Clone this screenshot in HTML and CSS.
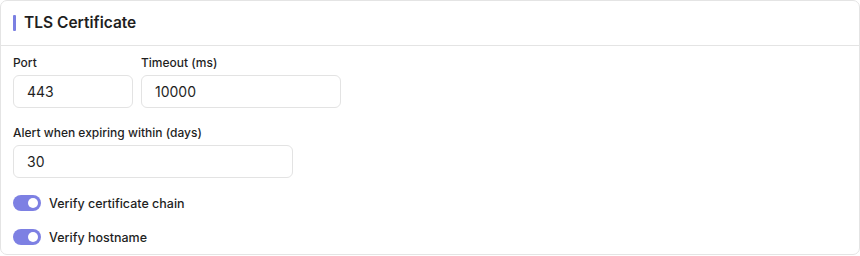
FILE: index.html
```html
<!DOCTYPE html>
<html>
<head>
<meta charset="utf-8">
<link rel="stylesheet" href="styles.css">
</head>
<body>
<section class="card">
  <header class="card-header">
    <span class="accent"></span>
    <h2 class="title">TLS Certificate</h2>
  </header>
  <div class="card-body">
    <div class="row">
      <div class="field">
        <label class="label">Port</label>
        <div class="input w-port">443</div>
      </div>
      <div class="field">
        <label class="label">Timeout (ms)</label>
        <div class="input w-timeout">10000</div>
      </div>
    </div>
    <div class="field">
      <label class="label">Alert when expiring within (days)</label>
      <div class="input w-alert">30</div>
    </div>
    <div class="toggles">
      <div class="toggle-row"><span class="toggle"><span class="knob"></span></span><span class="toggle-label">Verify certificate chain</span></div>
      <div class="toggle-row"><span class="toggle"><span class="knob"></span></span><span class="toggle-label">Verify hostname</span></div>
    </div>
  </div>
</section>
</body>
</html>
```
FILE: styles.css
```css
* { box-sizing: border-box; }
html, body { margin: 0; padding: 0; background: #ffffff; }
body { font-family: Inter, "Liberation Sans", sans-serif; color: #1f1f1f; }

.card {
  width: 860px;
  height: 255px;
  border: 1px solid #e4e4e4;
  border-radius: 7px;
  background: #fff;
}
.card-header {
  height: 45px;
  border-bottom: 1px solid #e4e4e4;
  display: flex;
  align-items: center;
  padding: 0 12px;
  gap: 8px;
}
.accent {
  width: 3px;
  height: 16px;
  border-radius: 1px;
  background: #7b80e2;
}
.title {
  margin: 0;
  font-size: 15.5px;
  font-weight: 600;
  color: #1f1f1f;
  line-height: 20px;
}
.card-body {
  padding: 9px 12px 0;
  display: flex;
  flex-direction: column;
  gap: 17px;
}
.row { display: flex; gap: 8px; }
.field { display: flex; flex-direction: column; gap: 4px; }
.label {
  font-size: 12px;
  font-weight: 500;
  line-height: 16px;
  color: #1f1f1f;
}
.input {
  height: 33px;
  border: 1px solid #e3e3e3;
  border-radius: 6px;
  padding: 0 13px;
  font-size: 14px;
  line-height: 31px;
  color: #1f1f1f;
}
.w-port { width: 120px; }
.w-timeout { width: 200px; }
.w-alert { width: 280px; }

.toggles { display: flex; flex-direction: column; gap: 18px; }
.toggle-row { display: flex; align-items: center; gap: 8px; height: 16px; }
.toggle {
  width: 28px;
  height: 16px;
  border-radius: 8px;
  background: #7d80e3;
  display: flex;
  align-items: center;
  justify-content: flex-end;
  padding-right: 3px;
}
.knob {
  width: 10px;
  height: 10px;
  border-radius: 50%;
  background: #fff;
}
.toggle-label { font-size: 12.5px; font-weight: 500; color: #1f1f1f; }
```
